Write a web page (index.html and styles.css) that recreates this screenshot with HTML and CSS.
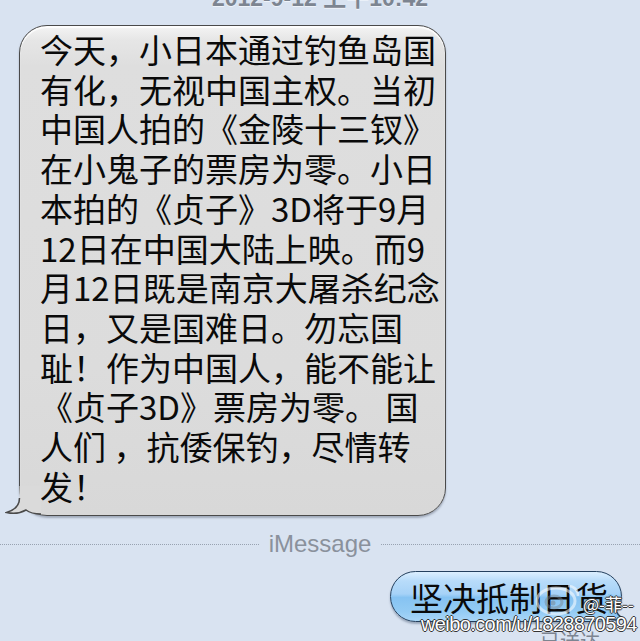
FILE: index.html
```html
<!DOCTYPE html>
<html lang="zh">
<head>
<meta charset="utf-8">
<link rel="stylesheet" href="styles.css">
</head>
<body>
<div class="screen">
  <div class="time"><div class="time-text">2012-9-12 上午10:42</div></div>

  <div class="row-in">
    <div class="bubble-in">
      <div class="msg">今天，小日本通过钓鱼岛国<br>有化，无视中国主权。当初<br>中国人拍的《金陵十三钗》<br>在小鬼子的票房为零。小日<br>本拍的《贞子》3D将于9月<br>12日在中国大陆上映。而9<br>月12日既是南京大屠杀纪念<br>日，又是国难日。勿忘国<br>耻！作为中国人，能不能让<br>《贞子3D》票房为零。 国<br>人们 ，抗倭保钓，尽情转<br>发！</div>
      <svg class="tail-in" width="40" height="32" viewBox="0 0 40 32">
        <path d="M14.5,0 L14.5,12 C14.5,19 10,24 1.5,26.5 C8,28 15,27.5 21,24 C25,27 30,28 36,28 L36,0 Z" fill="#dadada" stroke="none"/>
        <path d="M14.5,12 C14.5,19 10,24 1.5,26.5 C8,28 15,27.5 21,24 C25,27 30,28 36,28" fill="none" stroke="#4a4a4a" stroke-width="1.5"/>
      </svg>
    </div>
  </div>

  <div class="divider">
    <span class="dots"></span>
    <span class="divider-label">iMessage</span>
    <span class="dots"></span>
  </div>

  <div class="row-out">
    <div class="bubble-out">
      <span class="out-text">坚决抵制日货</span>
      <svg class="tail-out" width="24" height="30" viewBox="0 0 24 30">
        <path d="M0,0 L4,0 C4,10 7,19 15,25 C10,26.5 6,26.5 1,25 L0,25 Z" fill="#8cc6f2"/>
        <path d="M4,2 C4,10 7,19 15,25 C10,26.5 6,26.5 1,25" fill="none" stroke="#24405e" stroke-width="1.5"/>
      </svg>
    </div>
  </div>
  <div class="delivered">已送达</div>

  <div class="watermark">
    <svg class="wb-logo" width="48" height="34" viewBox="0 0 48 34">
      <ellipse cx="22" cy="19" rx="19" ry="13" fill="none" stroke="rgba(255,255,255,0.55)" stroke-width="3"/>
      <ellipse cx="20" cy="20" rx="8" ry="6" fill="none" stroke="rgba(120,130,140,0.45)" stroke-width="3"/>
      <circle cx="19" cy="21" r="2.5" fill="rgba(120,130,140,0.5)"/>
      <path d="M34,4 C40,4 44,8 44,14" fill="none" stroke="rgba(255,255,255,0.55)" stroke-width="2.5"/>
    </svg>
    <div class="wm-name">@-菲--</div>
    <div class="wm-url">weibo.com/u/1828870594</div>
  </div>
</div>
</body>
</html>
```

FILE: styles.css
```css
html, body {
  margin: 0;
  padding: 0;
  background: #d9e3f1;
}

.screen {
  position: relative;
  width: 640px;
  height: 641px;
  overflow: hidden;
  background: #d9e3f1;
  font-family: "Noto Sans CJK SC", "Liberation Sans", sans-serif;
}

.time {
  display: flow-root;
  height: 25px;
  text-align: center;
}

.time-text {
  margin-top: -15px;
  font-family: "Liberation Sans", "Noto Sans CJK SC", sans-serif;
  font-weight: bold;
  font-size: 23px;
  line-height: 26px;
  color: #7d8591;
  text-shadow: 0 1px 0 #eef3fa;
}

.row-in {
  display: flex;
  padding-left: 19px;
}

.bubble-in {
  position: relative;
  width: 427px;
  box-sizing: border-box;
  padding: 4px 0 9px 20px;
  border: 1.5px solid #4a4a4a;
  border-radius: 28px;
  background: linear-gradient(to bottom, #f4f4f4 0px, #e6e6e6 14px, #dedede 40px, #dcdcdc 70%, #d8d8d8 100%);
  box-shadow: 0 2px 2px rgba(60, 70, 90, 0.35), inset 0 2px 1px rgba(255,255,255,0.9);
}

.msg {
  font-size: 33px;
  line-height: 39.7px;
  color: #0a0a0a;
  white-space: nowrap;
}

.tail-in {
  position: absolute;
  left: -15.5px;
  bottom: -3px;
}

.divider {
  display: flex;
  align-items: center;
  gap: 10px;
  margin-top: 13px;
  height: 30px;
}

.dots {
  flex: 1;
  border-top: 1.5px dotted #98a2b1;
}

.divider-label {
  font-family: "Liberation Sans", sans-serif;
  font-size: 24px;
  color: #8a919c;
  line-height: 30px;
}

.row-out {
  display: flex;
  justify-content: flex-end;
  padding-right: 18px;
  margin-top: 12px;
}

.bubble-out {
  position: relative;
  width: 232px;
  height: 51px;
  box-sizing: border-box;
  border: 1.5px solid #24405e;
  border-radius: 26px;
  background: linear-gradient(to bottom, #dcefff 0%, #b8dcfa 18%, #a6d2f7 45%, #86c3f2 52%, #93cbf4 80%, #a9d6f8 100%);
  box-shadow: 0 2px 2px rgba(40, 60, 90, 0.35);
  display: flex;
  align-items: center;
  justify-content: center;
  padding-left: 6px;
}

.out-text {
  font-size: 33px;
  line-height: 40px;
  color: #0a0a0a;
  white-space: nowrap;
}

.tail-out {
  position: absolute;
  right: -11px;
  bottom: -3px;
}

.delivered {
  text-align: right;
  padding-right: 40px;
  margin-top: 7px;
  font-size: 20px;
  line-height: 24px;
  color: #7d8591;
}

.watermark {
  position: absolute;
  left: 418px;
  top: 582px;
  width: 222px;
  height: 56px;
}

.wb-logo {
  position: absolute;
  left: 116px;
  top: 0;
}

.wm-name {
  position: absolute;
  left: 165px;
  top: 12px;
  font-size: 17px;
  line-height: 20px;
  color: #ffffff;
  text-shadow: -1px 0 0 #333, 1px 0 0 #333, 0 -1px 0 #333, 0 1px 0 #333;
}

.wm-url {
  position: absolute;
  left: 3px;
  top: 31px;
  font-family: "Liberation Sans", sans-serif;
  font-size: 20px;
  line-height: 22px;
  letter-spacing: -0.6px;
  color: #ffffff;
  text-shadow: -1px 0 0 #333, 1px 0 0 #333, 0 -1px 0 #333, 0 1px 0 #333;
}
```
